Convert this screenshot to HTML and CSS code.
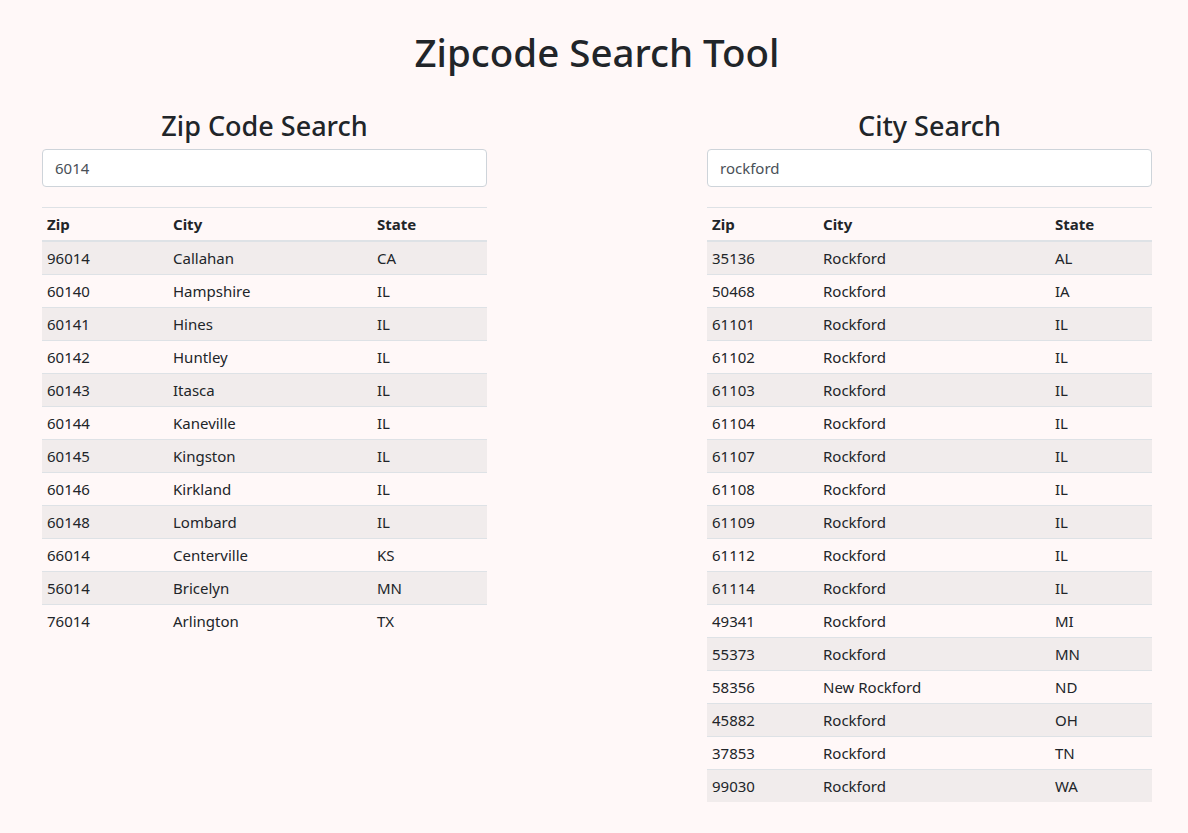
FILE: index.html
```html
<!DOCTYPE html>
<html lang="en">
<head>
<meta charset="utf-8">
<title>Zipcode Search Tool</title>
<link rel="stylesheet" href="styles.css">
</head>
<body>
<h1 class="title">Zipcode Search Tool</h1>
<div class="panels">
  <section class="panel">
    <h2 class="panel-title">Zip Code Search</h2>
    <input class="search" type="text" value="6014">
    <table class="results zip-results">
      <thead><tr><th>Zip</th><th>City</th><th>State</th></tr></thead>
      <tbody>
        <tr><td>96014</td><td>Callahan</td><td>CA</td></tr>
        <tr><td>60140</td><td>Hampshire</td><td>IL</td></tr>
        <tr><td>60141</td><td>Hines</td><td>IL</td></tr>
        <tr><td>60142</td><td>Huntley</td><td>IL</td></tr>
        <tr><td>60143</td><td>Itasca</td><td>IL</td></tr>
        <tr><td>60144</td><td>Kaneville</td><td>IL</td></tr>
        <tr><td>60145</td><td>Kingston</td><td>IL</td></tr>
        <tr><td>60146</td><td>Kirkland</td><td>IL</td></tr>
        <tr><td>60148</td><td>Lombard</td><td>IL</td></tr>
        <tr><td>66014</td><td>Centerville</td><td>KS</td></tr>
        <tr><td>56014</td><td>Bricelyn</td><td>MN</td></tr>
        <tr><td>76014</td><td>Arlington</td><td>TX</td></tr>
      </tbody>
    </table>
  </section>
  <section class="panel">
    <h2 class="panel-title">City Search</h2>
    <input class="search" type="text" value="rockford">
    <table class="results city-results">
      <thead><tr><th>Zip</th><th>City</th><th>State</th></tr></thead>
      <tbody>
        <tr><td>35136</td><td>Rockford</td><td>AL</td></tr>
        <tr><td>50468</td><td>Rockford</td><td>IA</td></tr>
        <tr><td>61101</td><td>Rockford</td><td>IL</td></tr>
        <tr><td>61102</td><td>Rockford</td><td>IL</td></tr>
        <tr><td>61103</td><td>Rockford</td><td>IL</td></tr>
        <tr><td>61104</td><td>Rockford</td><td>IL</td></tr>
        <tr><td>61107</td><td>Rockford</td><td>IL</td></tr>
        <tr><td>61108</td><td>Rockford</td><td>IL</td></tr>
        <tr><td>61109</td><td>Rockford</td><td>IL</td></tr>
        <tr><td>61112</td><td>Rockford</td><td>IL</td></tr>
        <tr><td>61114</td><td>Rockford</td><td>IL</td></tr>
        <tr><td>49341</td><td>Rockford</td><td>MI</td></tr>
        <tr><td>55373</td><td>Rockford</td><td>MN</td></tr>
        <tr><td>58356</td><td>New Rockford</td><td>ND</td></tr>
        <tr><td>45882</td><td>Rockford</td><td>OH</td></tr>
        <tr><td>37853</td><td>Rockford</td><td>TN</td></tr>
        <tr><td>99030</td><td>Rockford</td><td>WA</td></tr>
      </tbody>
    </table>
  </section>
</div>
</body>
</html>
```

FILE: styles.css
```css
* { box-sizing: border-box; }

html, body {
  margin: 0;
  padding: 0;
}

body {
  background: #fff8f8;
  color: #212529;
  font-family: "Noto Sans", "Open Sans", sans-serif;
  font-size: 15px;
  line-height: 1.5;
}

.title {
  margin: 0;
  padding-top: 29px;
  padding-left: 6px;
  text-align: center;
  font-size: 38.5px;
  font-weight: 500;
  line-height: 1.2;
}

.panels {
  display: flex;
  justify-content: space-between;
  padding: 0 36px 0 42px;
  margin-top: 35px;
}

.panel {
  width: 445px;
}

.panel-title {
  margin: 0 0 6px;
  text-align: center;
  font-size: 27px;
  font-weight: 500;
  line-height: 1.2;
}

.search {
  display: block;
  width: 100%;
  height: 38px;
  padding: 6px 12px;
  font-family: inherit;
  font-size: 15px;
  line-height: 24px;
  color: #495057;
  background: #fff;
  border: 1px solid #ced4da;
  border-radius: 4px;
}

.results {
  width: 100%;
  margin-top: 20px;
  border-collapse: collapse;
  table-layout: fixed;
  font-size: 15px;
}

.results th,
.results td {
  padding: 4px 4px 4px 5px;
  text-align: left;
  line-height: 24px;
  border-bottom: 1px solid #dee2e6;
}

.results thead tr {
  border-top: 1px solid #dee2e6;
}

.results th {
  font-weight: 700;
  border-bottom: 2px solid #dee2e6;
  padding-bottom: 4px;
}

.results tbody tr:nth-child(odd) {
  background: #f1ecec;
}

.results tbody tr:last-child td {
  border-bottom: none;
}

.zip-results th:nth-child(1) { width: 126px; }
.zip-results th:nth-child(2) { width: 204px; }
.zip-results th:nth-child(3) { width: 115px; }

.city-results th:nth-child(1) { width: 111px; }
.city-results th:nth-child(2) { width: 232px; }
.city-results th:nth-child(3) { width: 102px; }
```
